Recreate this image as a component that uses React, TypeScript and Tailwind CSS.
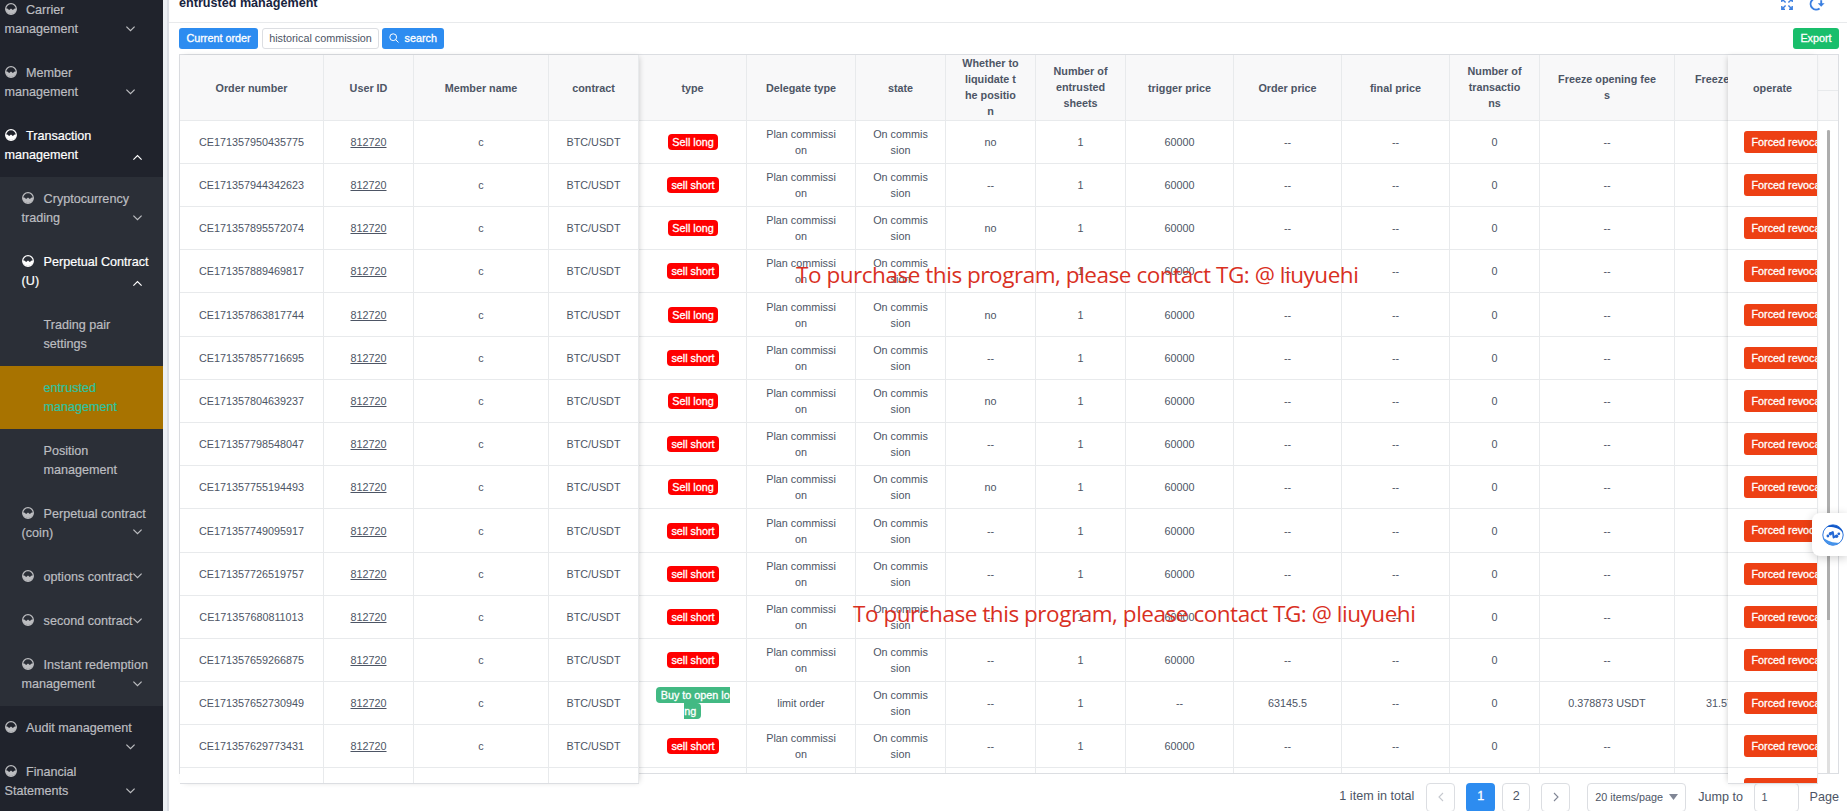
import type { ReactNode } from 'react';

type MenuEntry = {
  label: string;
  level: 1 | 2 | 3;
  height: string;
  arrow?: 'up' | 'down';
  arrowPos?: string;
  active?: boolean;
  selected?: boolean;
};

const TALL = 'h-[63px]';
const SHORT = 'h-[44px]';

const topMenu: MenuEntry[] = [
  { label: 'Carrier\nmanagement', level: 1, height: TALL, arrow: 'down', arrowPos: 'left-[125px] top-[35px]' },
  { label: 'Member\nmanagement', level: 1, height: TALL, arrow: 'down', arrowPos: 'left-[125px] top-[35px]' },
  { label: 'Transaction\nmanagement', level: 1, height: TALL, arrow: 'up', arrowPos: 'left-[132px] top-[38px]', active: true },
];

const subMenu: MenuEntry[] = [
  { label: 'Cryptocurrency\ntrading', level: 2, height: TALL, arrow: 'down', arrowPos: 'left-[132px] top-[35px]' },
  { label: 'Perpetual Contract\n(U)', level: 2, height: TALL, arrow: 'up', arrowPos: 'left-[132px] top-[38px]', active: true },
  { label: 'Trading pair\nsettings', level: 3, height: TALL },
  { label: 'entrusted\nmanagement', level: 3, height: TALL, selected: true },
  { label: 'Position\nmanagement', level: 3, height: TALL },
  { label: 'Perpetual contract\n(coin)', level: 2, height: TALL, arrow: 'down', arrowPos: 'left-[132px] top-[34px]' },
  { label: 'options contract', level: 2, height: SHORT, arrow: 'down', arrowPos: 'left-[132px] top-[15px]' },
  { label: 'second contract', level: 2, height: SHORT, arrow: 'down', arrowPos: 'left-[132px] top-[16px]' },
  { label: 'Instant redemption\nmanagement', level: 2, height: TALL, arrow: 'down', arrowPos: 'left-[132px] top-[35px]' },
];

const bottomMenu: MenuEntry[] = [
  { label: 'Audit management', level: 1, height: SHORT, arrow: 'down', arrowPos: 'left-[125px] top-[35px]' },
  { label: 'Financial\nStatements', level: 1, height: TALL, arrow: 'down', arrowPos: 'left-[125px] top-[35px]' },
];

function WaveIcon({ className }: { className: string }) {
  return (
    <svg viewBox="0 0 12 12" className={`inline-block size-3 align-[-1px] ${className}`}>
      <circle cx="6" cy="6" r="5.35" fill="none" stroke="currentColor" strokeWidth="1.2" />
      <path d="M.7 5.6 L2.3 5.4 L4.2 6.9 L6 5.5 L7.8 6.9 L9.7 5.4 L11.3 5.6 A5.3 5.3 0 0 1 .7 5.6Z" fill="currentColor" />
    </svg>
  );
}

function Arrow({ dir, className }: { dir: 'up' | 'down'; className: string }) {
  return (
    <svg viewBox="0 0 11 11" className={`absolute size-[11px] ${className}`} fill="none" stroke="currentColor" strokeWidth="1.2">
      <path d={dir === 'down' ? 'M1.4 3.6 L5.5 7.7 L9.6 3.6' : 'M1.4 7.6 L5.5 3.5 L9.6 7.6'} />
    </svg>
  );
}

const indent = { 1: 'pl-[4.5px]', 2: 'pl-[21.6px]', 3: 'pl-[43.5px]' };

function MenuItem({ item }: { item: MenuEntry }) {
  const tone = item.selected
    ? 'bg-[#a87300] text-[#2dc3a0]'
    : item.active
      ? 'text-white'
      : 'text-[#bcbdc0]';
  return (
    <div className={`relative shrink-0 whitespace-pre pt-[12.6px] text-[12.6px] leading-[19px] [-webkit-text-stroke:0.2px] ${item.height} ${indent[item.level]} ${tone}`}>
      {item.level < 3 && <WaveIcon className={item.level === 1 ? 'mr-[9.5px]' : 'mr-[10px]'} />}
      {item.label}
      {item.arrow && <Arrow dir={item.arrow} className={item.arrowPos ?? ''} />}
    </div>
  );
}

type Order = {
  id: string;
  type: 'Sell long' | 'sell short' | 'Buy to open lo\nng';
  delegate: string;
  liquidate: string;
  trigger: string;
  price: string;
  fee: string;
  margin: string;
};

function plan(id: string, type: Order['type'], liquidate: string): Order {
  return { id, type, delegate: 'Plan commissi\non', liquidate, trigger: '60000', price: '--', fee: '--', margin: '' };
}

const orders: Order[] = [
  plan('CE171357950435775', 'Sell long', 'no'),
  plan('CE171357944342623', 'sell short', '--'),
  plan('CE171357895572074', 'Sell long', 'no'),
  plan('CE171357889469817', 'sell short', '--'),
  plan('CE171357863817744', 'Sell long', 'no'),
  plan('CE171357857716695', 'sell short', '--'),
  plan('CE171357804639237', 'Sell long', 'no'),
  plan('CE171357798548047', 'sell short', '--'),
  plan('CE171357755194493', 'Sell long', 'no'),
  plan('CE171357749095917', 'sell short', '--'),
  plan('CE171357726519757', 'sell short', '--'),
  plan('CE171357680811013', 'sell short', '--'),
  plan('CE171357659266875', 'sell short', '--'),
  {
    id: 'CE171357652730949',
    type: 'Buy to open lo\nng',
    delegate: 'limit order',
    liquidate: '--',
    trigger: '--',
    price: '63145.5',
    fee: '0.378873 USDT',
    margin: '31.57',
  },
  plan('CE171357629773431', 'sell short', '--'),
];

const rowHeight = (i: number) => (i === 4 || i === 9 ? 'h-[44px]' : 'h-[43px]');

const LEFT_GRID = 'grid grid-cols-[144px_90px_135px_90px]';
const MAIN_GRID = 'grid grid-cols-[108px_109px_90px_90px_90px_108px_108px_108px_90px_135px_135px]';

function Cell({ children, className = '' }: { children?: ReactNode; className?: string }) {
  return (
    <div className={`flex items-center justify-center overflow-hidden whitespace-pre border-r border-b border-[#e8eaec] text-center leading-4 ${className}`}>
      <span>{children}</span>
    </div>
  );
}

function HeadCell({ children, className = '' }: { children?: ReactNode; className?: string }) {
  return <Cell className={`h-[66px] bg-[#f8f8f9] font-bold ${className}`}>{children}</Cell>;
}

function TypeTag({ type }: { type: Order['type'] }) {
  const tone = type.startsWith('Buy') ? 'bg-[#42b983]' : 'bg-[#ff0000]';
  return <span className={`ml-px rounded-[4px] px-[4.5px] py-[2px] text-white [-webkit-text-stroke:0.3px] ${tone}`}>{type}</span>;
}

function FixedLeft() {
  return (
    <div className="z-10 h-[729px] w-[459px] shrink-0 overflow-hidden border-b border-[#dcdee2] bg-white shadow-[2px_0_6px_-2px_rgba(0,0,0,0.2)]">
      <div className={LEFT_GRID}>
        <HeadCell>Order number</HeadCell>
        <HeadCell>User ID</HeadCell>
        <HeadCell>Member name</HeadCell>
        <HeadCell>contract</HeadCell>
      </div>
      {orders.map((o, i) => (
        <div key={o.id} className={`${LEFT_GRID} ${rowHeight(i)}`}>
          <Cell>{o.id}</Cell>
          <Cell><span className="underline">812720</span></Cell>
          <Cell>c</Cell>
          <Cell>BTC/USDT</Cell>
        </div>
      ))}
      <div className={`${LEFT_GRID} h-[43px]`}>
        <Cell /><Cell /><Cell /><Cell />
      </div>
    </div>
  );
}

const mainHeads = [
  'type',
  'Delegate type',
  'state',
  'Whether to\nliquidate t\nhe positio\nn',
  'Number of\nentrusted\nsheets',
  'trigger price',
  'Order price',
  'final price',
  'Number of\ntransactio\nns',
  'Freeze opening fee\ns',
];

function MainColumns() {
  return (
    <div className="h-[718px] min-w-0 flex-1 overflow-hidden">
      <div className={MAIN_GRID}>
        {mainHeads.map((h) => (
          <HeadCell key={h} className={h.includes('\n') ? 'pb-[2px]' : ''}>{h}</HeadCell>
        ))}
        <HeadCell className="justify-start! pb-[18px] pl-[20px]">Freeze</HeadCell>
      </div>
      {orders.map((o, i) => (
        <div key={o.id} className={`${MAIN_GRID} ${rowHeight(i)}`}>
          <Cell><TypeTag type={o.type} /></Cell>
          <Cell>{o.delegate}</Cell>
          <Cell>{'On commis\nsion'}</Cell>
          <Cell>{o.liquidate}</Cell>
          <Cell>1</Cell>
          <Cell>{o.trigger}</Cell>
          <Cell>{o.price}</Cell>
          <Cell>--</Cell>
          <Cell>0</Cell>
          <Cell>{o.fee}</Cell>
          <Cell className="justify-start! pl-[31px]">{o.margin}</Cell>
        </div>
      ))}
      <div className={`${MAIN_GRID} h-[43px]`}>
        {mainHeads.map((h) => (
          <Cell key={h} />
        ))}
        <Cell />
      </div>
    </div>
  );
}

function RevokeCell({ height }: { height: string }) {
  return (
    <div className={`flex items-center overflow-hidden border-r border-b border-[#e8eaec] pl-4 ${height}`}>
      <button className="h-[22px] shrink-0 whitespace-nowrap rounded-[3px] bg-[#ed4014] px-[7.5px] text-white [-webkit-text-stroke:0.3px]">Forced revocation</button>
    </div>
  );
}

function FixedRight() {
  return (
    <div className="z-10 h-[729px] w-[90px] shrink-0 overflow-hidden border-b border-[#dcdee2] bg-white shadow-[-2px_0_6px_-2px_rgba(0,0,0,0.2)]">
      <HeadCell>operate</HeadCell>
      {orders.map((o, i) => (
        <RevokeCell key={o.id} height={rowHeight(i)} />
      ))}
      <RevokeCell height="h-[43px]" />
    </div>
  );
}

function ScrollGutter() {
  return (
    <div className="flex w-5 shrink-0 flex-col">
      <div className="h-9 border-b border-[#e8eaec] bg-[#f8f8f9]" />
      <div className="h-[30px] border-b border-[#e8eaec] bg-[#f8f8f9]" />
      <div className="ml-[9px] mt-[9px] h-[643px] w-[3px] bg-[#e0e0e0]">
        <div className="h-[490px] rounded-t-sm bg-[#adadad]" />
      </div>
    </div>
  );
}

const PAGE_BOX = 'flex h-[29px] items-center justify-center rounded-[4px] border border-[#dcdee2] bg-white pb-[2px]';

function Pagination() {
  return (
    <div className="mt-[9px] flex h-[29px] items-center justify-end text-[12.6px]">
      <span className="mr-[12px] pb-[2px]">1 item in total</span>
      <div className={`${PAGE_BOX} mr-[11px] w-[29px]`}>
        <svg viewBox="0 0 10 10" className="size-[10px]" fill="none" stroke="#c5c8ce" strokeWidth="1.1"><path d="M7 1 L3 5 L7 9" /></svg>
      </div>
      <div className="mr-[7px] flex h-[29px] w-[29px] items-center justify-center rounded-[4px] bg-[#2d8cf0] pb-[2px] text-white [-webkit-text-stroke:0.3px]">1</div>
      <div className={`${PAGE_BOX} mr-[11px] w-[28px]`}>2</div>
      <div className={`${PAGE_BOX} mr-[17px] w-[29px]`}>
        <svg viewBox="0 0 10 10" className="size-[10px]" fill="none" stroke="#808695" strokeWidth="1.1"><path d="M3 1 L7 5 L3 9" /></svg>
      </div>
      <div className="mr-[12px] flex h-[29px] w-[99px] items-center justify-between rounded-[4px] border border-[#dcdee2] pl-[7px] pr-[7px] text-[10.8px]">
        <span>20 items/page</span>
        <svg viewBox="0 0 9 6" className="-mt-px h-[6px] w-[9px]"><path d="M0 0 H9 L4.5 6Z" fill="#808695" /></svg>
      </div>
      <span className="mr-[10.5px]">Jump to</span>
      <div className="mr-[11px] flex h-[29px] w-[45px] items-center rounded-[4px] border border-[#dcdee2] pl-[7px] text-[10.8px]">1</div>
      <span>Page</span>
    </div>
  );
}

function TitleBar() {
  return (
    <div className="-mt-[13px] flex h-9 shrink-0 items-center justify-between border-b border-[#e8eaec] pl-[10px] pr-[22px] text-[#17233d]">
      <span className="pb-[3px] text-[12.6px] font-bold">entrusted management</span>
      <div className="flex items-center gap-4 pb-[2px] text-[#2d8cf0]">
        <svg viewBox="0 0 12 12" className="size-3 fill-none stroke-[#3b7fe0]" strokeWidth="1.4">
          <path d="M.8 4 V.8 H4 M.8 .8 L4.6 4.6 M8 .8 H11.2 V4 M11.2 .8 L7.4 4.6 M.8 8 V11.2 H4 M.8 11.2 L4.6 7.4 M11.2 8 V11.2 H8 M11.2 11.2 L7.4 7.4" />
        </svg>
        <svg viewBox="0 0 16 14" className="h-[14px] w-4">
          <path d="M10.2 2.2 A5.6 5.6 0 1 0 10.6 11.4" fill="none" stroke="#3b7fe0" strokeWidth="1.9" />
          <path d="M12.2 3.2 V7" stroke="#3b7fe0" strokeWidth="1.9" />
          <path d="M8.8 6.2 H15.6 L12.2 9.7Z" fill="#3b7fe0" />
        </svg>
      </div>
    </div>
  );
}

function Toolbar() {
  return (
    <div className="mt-[5px] flex h-[21px] shrink-0 leading-none">
      <button className="mr-1 w-[79px] rounded-[3px] bg-[#2d8cf0] pb-px text-white [-webkit-text-stroke:0.3px]">Current order</button>
      <button className="mr-[3px] w-[117px] rounded-[3px] border border-[#dcdee2] pb-px">historical commission</button>
      <button className="flex w-[62px] items-center rounded-[3px] bg-[#2d8cf0] pb-px pl-[7px] text-white [-webkit-text-stroke:0.3px]">
        <svg viewBox="0 0 10 10" className="mr-[5.5px] size-[10px]" fill="none" stroke="currentColor" strokeWidth="1">
          <circle cx="4.2" cy="4.2" r="3.4" />
          <path d="M6.7 6.7 L9.5 9.5" />
        </svg>
        search
      </button>
      <button className="ml-auto w-[46px] rounded-[3px] bg-[#19be6b] pb-px text-white [-webkit-text-stroke:0.3px]">Export</button>
    </div>
  );
}

function FloatingHelper() {
  return (
    <div className="absolute right-0 top-[513px] z-20 flex h-[43px] w-[35px] items-center rounded-l-[8px] bg-white pl-[10px] shadow-[0_2px_10px_rgba(0,0,0,0.2)]">
      <svg viewBox="0 0 22 22" className="size-[22px]">
        <circle cx="11" cy="11" r="10.2" fill="#fff" stroke="#2f77dd" strokeWidth="1" />
        <path d="M4.6 3.2 A10.2 10.2 0 0 1 21 9 C17 3.6 10.5 2.6 4.6 3.2Z" fill="#1157c8" />
        <path d="M1.2 13.6 C5 17.2 11 19 17.4 19 A10.2 10.2 0 0 1 1.2 13.6Z" fill="#4593ea" />
        <path d="M8.8 9.2 L10.8 8 L11.6 13.4 L14.4 11.8" fill="none" stroke="#2468d4" strokeWidth="2" strokeLinejoin="round" strokeLinecap="round" />
        <circle cx="5.9" cy="12" r="1.4" fill="#2468d4" />
        <circle cx="8.4" cy="9.8" r="1.7" fill="#2468d4" />
        <circle cx="14.6" cy="12.2" r="1.7" fill="#2468d4" />
        <circle cx="16.8" cy="9.8" r="1.4" fill="#2468d4" />
      </svg>
    </div>
  );
}

const WATERMARK = "pointer-events-none absolute z-30 whitespace-nowrap font-['Open_Sans','Noto_Sans',sans-serif] text-[22.5px] leading-[30px] tracking-[-0.46px] text-[#d9301f]";

export default function App() {
  return (
    <div className="relative flex h-[811px] w-full overflow-hidden bg-white font-['Liberation_Sans',Arial,sans-serif] text-[10.8px] text-[#4d5565]">
      <aside className="flex w-[163px] shrink-0 flex-col overflow-hidden bg-[#20232c]">
        <div className="-mt-[12px] flex shrink-0 flex-col">
          {topMenu.map((m) => <MenuItem key={m.label} item={m} />)}
        </div>
        <div className="flex shrink-0 flex-col bg-[#2b2f37]">
          {subMenu.map((m) => <MenuItem key={m.label} item={m} />)}
        </div>
        <div className="flex shrink-0 flex-col">
          {bottomMenu.map((m) => <MenuItem key={m.label} item={m} />)}
        </div>
      </aside>
      <div className="w-[6px] shrink-0 border-r-2 border-[#dcdfe5] bg-[#edf0f4]" />
      <main className="flex min-w-0 flex-1 flex-col">
        <TitleBar />
        <div className="flex flex-col pl-[10px] pr-2">
          <Toolbar />
          <div className="mt-[5px] flex h-[720px] border border-[#dcdee2]">
            <FixedLeft />
            <MainColumns />
            <FixedRight />
            <ScrollGutter />
          </div>
          <Pagination />
        </div>
      </main>
      <FloatingHelper />
      <p className={`${WATERMARK} left-[796px] top-[260px]`}>To purchase this program, please contact TG: @ liuyuehi</p>
      <p className={`${WATERMARK} left-[853px] top-[599px]`}>To purchase this program, please contact TG: @ liuyuehi</p>
    </div>
  );
}
